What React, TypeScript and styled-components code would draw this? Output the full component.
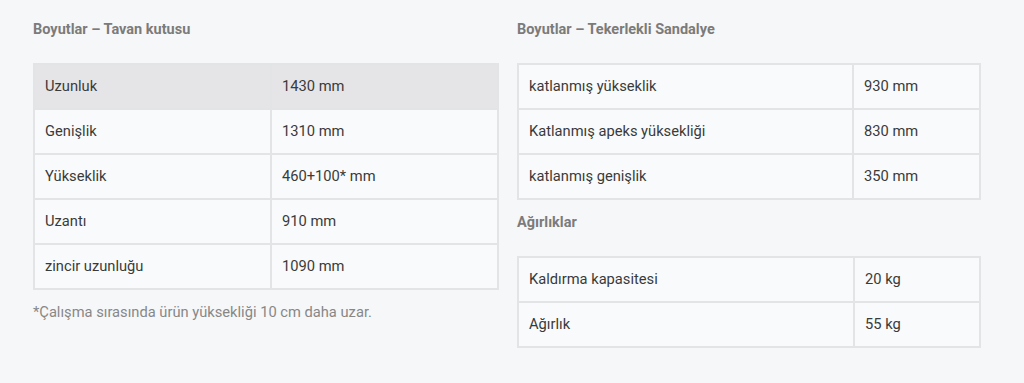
import styled, { createGlobalStyle } from 'styled-components';

const GlobalStyle = createGlobalStyle`
  html, body {
    margin: 0;
    padding: 0;
    background: #f6f7f9;
  }
  body {
    font-family: Roboto, "Liberation Sans", Arial, sans-serif;
    color: #333;
  }
`;

const Page = styled.div`
  display: grid;
  grid-template-columns: 466px 464px;
  column-gap: 18px;
  align-items: start;
  padding: 21px 43px 0 33px;
  height: 383px;
  box-sizing: border-box;
`;

const Column = styled.div`
  display: flex;
  flex-direction: column;
`;

const Heading = styled.h3`
  margin: 0 0 25px;
  font-size: 14.5px;
  line-height: 17px;
  font-weight: 700;
  color: #7b7b7b;
`;

const Table = styled.table`
  width: 100%;
  border-collapse: collapse;
  border: 2px solid #e3e4e6;
  table-layout: fixed;
`;

const Row = styled.tr<{ $head?: boolean }>`
  background: ${(p) => (p.$head ? '#e5e5e7' : '#f9fafb')};
`;

const Cell = styled.td`
  height: 43px;
  padding: 0 12px 0 10px;
  border: 2px solid #e3e4e6;
  font-size: 14.7px;
  line-height: 17px;
  color: #3a3a3a;
  vertical-align: middle;
`;

const Note = styled.p`
  margin: 14px 0 0;
  font-size: 14.7px;
  line-height: 17px;
  color: #878787;
`;

const Spacer = styled.div`
  height: 14px;
`;

const tavan = [
  ['Uzunluk', '1430 mm'],
  ['Genişlik', '1310 mm'],
  ['Yükseklik', '460+100* mm'],
  ['Uzantı', '910 mm'],
  ['zincir uzunluğu', '1090 mm'],
];

const sandalye = [
  ['katlanmış yükseklik', '930 mm'],
  ['Katlanmış apeks yüksekliği', '830 mm'],
  ['katlanmış genişlik', '350 mm'],
];

const agirlik = [
  ['Kaldırma kapasitesi', '20 kg'],
  ['Ağırlık', '55 kg'],
];

function SpecTable({ rows, split, headFirst }: { rows: string[][]; split: string; headFirst?: boolean }) {
  return (
    <Table>
      <colgroup>
        <col style={{ width: split }} />
        <col />
      </colgroup>
      <tbody>
        {rows.map((r, i) => (
          <Row key={i} $head={headFirst && i === 0}>
            <Cell>{r[0]}</Cell>
            <Cell>{r[1]}</Cell>
          </Row>
        ))}
      </tbody>
    </Table>
  );
}

export default function App() {
  return (
    <>
      <GlobalStyle />
      <Page>
        <Column>
          <Heading>Boyutlar – Tavan kutusu</Heading>
          <SpecTable rows={tavan} split="237px" headFirst />
          <Note>*Çalışma sırasında ürün yüksekliği 10 cm daha uzar.</Note>
        </Column>
        <Column>
          <Heading>Boyutlar – Tekerlekli Sandalye</Heading>
          <SpecTable rows={sandalye} split="335px" />
          <Spacer />
          <Heading>Ağırlıklar</Heading>
          <SpecTable rows={agirlik} split="336px" />
        </Column>
      </Page>
    </>
  );
}
